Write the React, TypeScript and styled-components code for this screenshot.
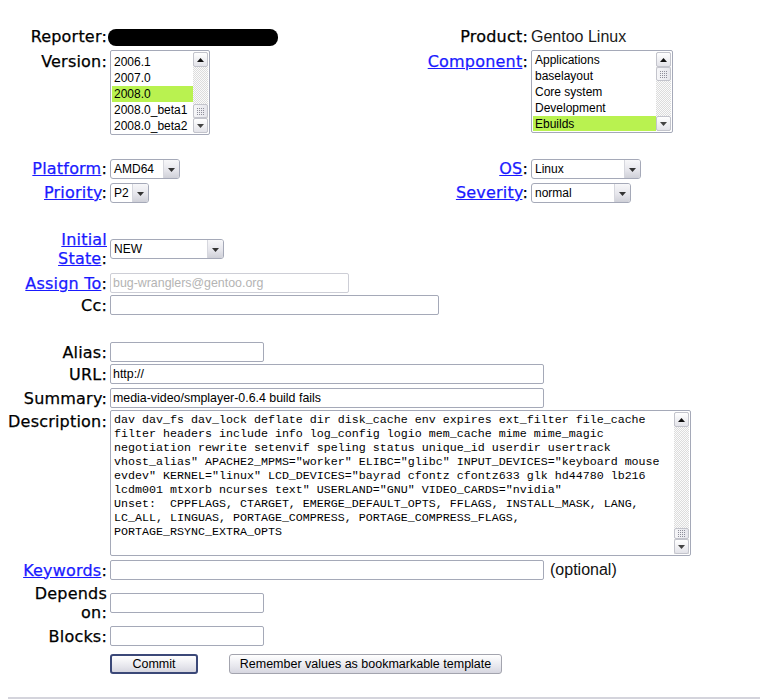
import React from "react";
import styled, { createGlobalStyle } from "styled-components";

const versions = ["2006.1", "2007.0", "2008.0", "2008.0_beta1", "2008.0_beta2"];
const components = ["Applications", "baselayout", "Core system", "Development", "Ebuilds"];

const description = [
  "dav dav_fs dav_lock deflate dir disk_cache env expires ext_filter file_cache",
  "filter headers include info log_config logio mem_cache mime mime_magic",
  "negotiation rewrite setenvif speling status unique_id userdir usertrack",
  'vhost_alias" APACHE2_MPMS="worker" ELIBC="glibc" INPUT_DEVICES="keyboard mouse',
  'evdev" KERNEL="linux" LCD_DEVICES="bayrad cfontz cfontz633 glk hd44780 lb216',
  'lcdm001 mtxorb ncurses text" USERLAND="GNU" VIDEO_CARDS="nvidia"',
  "Unset:  CPPFLAGS, CTARGET, EMERGE_DEFAULT_OPTS, FFLAGS, INSTALL_MASK, LANG,",
  "LC_ALL, LINGUAS, PORTAGE_COMPRESS, PORTAGE_COMPRESS_FLAGS,",
  "PORTAGE_RSYNC_EXTRA_OPTS",
].join("\n");

const GlobalStyle = createGlobalStyle`
  body {
    margin: 8px;
    background: #fff;
    color: #000;
    font-family: "DejaVu Sans", Verdana, sans-serif;
  }
`;

const Page = styled.form`
  padding-top: 19px;
`;

const TopTable = styled.div`
  display: grid;
  grid-template-columns: 99px 300px 115px 1fr;
  column-gap: 3px;
  row-gap: 4px;
  align-items: start;
`;

const Spacer = styled.div<{ $h: number }>`
  grid-column: 1 / -1;
  height: ${(p) => p.$h}px;
`;

const Label = styled.div<{ $pad?: number }>`
  font-size: 16px;
  line-height: 19px;
  letter-spacing: 0.2px;
  text-align: right;
  white-space: nowrap;
  -webkit-text-stroke: 0.25px currentColor;
  padding-top: ${(p) => p.$pad ?? 0}px;

  a {
    color: #1a1aff;
    text-decoration: underline;
  }
`;

const Cell = styled.div`
  display: flex;
  align-items: center;
  gap: 6px;
`;

const Row = styled.div<{ $gap: number; $align?: string }>`
  display: grid;
  grid-template-columns: 99px 1fr;
  column-gap: 3px;
  align-items: ${(p) => p.$align ?? "center"};
  margin-top: ${(p) => p.$gap}px;
`;

const Redacted = styled.div`
  width: 170px;
  height: 17px;
  margin: 2px 0 0 -2px;
  border-radius: 8px;
  background: #000;
`;

const PlainValue = styled.span`
  font-family: "Liberation Sans", Arial, sans-serif;
  font-size: 16px;
  line-height: 19px;
  color: #1a1a1a;
`;

/* list boxes */

const ListFrame = styled.div<{ $w: number; $h: number }>`
  display: flex;
  width: ${(p) => p.$w}px;
  height: ${(p) => p.$h}px;
  box-sizing: border-box;
  padding: 1px;
  border: 1px solid #a5a9b8;
  border-radius: 2px;
  background: #fff;
`;

const ListItems = styled.div<{ $shift: number }>`
  flex: 1;
  overflow: hidden;
  padding-top: ${(p) => p.$shift}px;
`;

const ListItem = styled.div<{ $selected?: boolean }>`
  height: 16px;
  line-height: 16px;
  padding-left: 2px;
  font-family: "Liberation Sans", Arial, sans-serif;
  font-size: 12px;
  white-space: nowrap;
  background: ${(p) => (p.$selected ? "#b9f250" : "transparent")};
`;

const ScrollColumn = styled.div`
  display: flex;
  flex-direction: column;
  width: 15px;
  background: repeating-conic-gradient(#dcdcdc 0 25%, #fbfbfb 0 50%) 0 0 / 2px 2px;
`;

const ScrollButton = styled.div`
  display: flex;
  align-items: center;
  justify-content: center;
  height: 15px;
  box-sizing: border-box;
  border: 1px solid #c3c4cc;
  border-radius: 2px;
  background: linear-gradient(#ffffff, #e3e3e9);
`;

const Track = styled.div`
  flex: 1;
`;

const Thumb = styled.div<{ $h: number }>`
  display: flex;
  align-items: center;
  justify-content: center;
  height: ${(p) => p.$h}px;
  box-sizing: border-box;
  border: 1px solid #c3c4cc;
  border-radius: 2px;
  background: linear-gradient(90deg, #f6f6f8, #e6e6ec);
`;

const Arrow = ({ dir, color = "#111" }: { dir: "up" | "down"; color?: string }) => (
  <svg width="7" height="4" viewBox="0 0 7 4">
    <path d={dir === "up" ? "M0 4L3.5 0L7 4Z" : "M0 0L7 0L3.5 4Z"} fill={color} />
  </svg>
);

const Grip = () => (
  <svg width="7" height="7" viewBox="0 0 7 7">
    {[0, 2, 4, 6].map((x) =>
      [0, 2, 4, 6].map((y) => (
        <rect key={`${x}-${y}`} x={x} y={y} width="1" height="1" fill="#8e8e9a" />
      ))
    )}
  </svg>
);

const Scrollbar = ({ thumb, thumbH }: { thumb: "top" | "bottom"; thumbH: number }) => (
  <ScrollColumn>
    <ScrollButton>
      <Arrow dir="up" />
    </ScrollButton>
    {thumb === "top" && (
      <Thumb $h={thumbH}>
        <Grip />
      </Thumb>
    )}
    <Track />
    {thumb === "bottom" && (
      <Thumb $h={thumbH}>
        <Grip />
      </Thumb>
    )}
    <ScrollButton>
      <Arrow dir="down" color="#444" />
    </ScrollButton>
  </ScrollColumn>
);

const ListBox = ({
  items,
  selected,
  width,
  height,
  shift,
  thumb,
}: {
  items: string[];
  selected: string;
  width: number;
  height: number;
  shift: number;
  thumb: "top" | "bottom";
}) => (
  <ListFrame $w={width} $h={height}>
    <ListItems $shift={shift}>
      {items.map((item) => (
        <ListItem key={item} $selected={item === selected}>
          {item}
        </ListItem>
      ))}
    </ListItems>
    <Scrollbar thumb={thumb} thumbH={14} />
  </ListFrame>
);

/* closed selects */

const SelectFrame = styled.div<{ $w: number }>`
  display: flex;
  width: ${(p) => p.$w}px;
  height: 20px;
  box-sizing: border-box;
  border: 1px solid #a5a9b8;
  border-radius: 3px;
  background: #fff;
  overflow: hidden;
`;

const SelectValue = styled.span`
  flex: 1;
  padding-left: 3px;
  font-family: "Liberation Sans", Arial, sans-serif;
  font-size: 12px;
  line-height: 18px;
  white-space: nowrap;
`;

const DropButton = styled.span`
  display: flex;
  align-items: center;
  justify-content: center;
  width: 16px;
  padding-top: 2px;
  box-sizing: border-box;
  border-left: 1px solid #d6d7de;
  background: linear-gradient(#f7f7f9 0%, #e6e6ec 55%, #cfd0d8 100%);
`;

const Select = ({ value, width }: { value: string; width: number }) => (
  <SelectFrame $w={width}>
    <SelectValue>{value}</SelectValue>
    <DropButton>
      <Arrow dir="down" color="#333" />
    </DropButton>
  </SelectFrame>
);

/* text fields */

const TextInput = styled.input<{ $w: number }>`
  width: ${(p) => p.$w}px;
  height: 20px;
  box-sizing: border-box;
  margin: 0;
  padding: 0 2px;
  border: 1px solid #a5a9b8;
  border-radius: 2px;
  background: #fff;
  color: #000;
  font-family: "Liberation Sans", Arial, sans-serif;
  font-size: 12.4px;
  outline: none;

  &:disabled {
    color: #b4b4b4;
    border-color: #cdced6;
    background: #fff;
  }
`;

const AreaFrame = styled.div`
  display: flex;
  width: 581px;
  height: 146px;
  box-sizing: border-box;
  padding: 1px;
  border: 1px solid #a5a9b8;
  border-radius: 2px;
  background: #fff;
`;

const TextArea = styled.textarea`
  flex: 1;
  margin: 0;
  padding: 1px 2px 0;
  border: none;
  outline: none;
  resize: none;
  overflow: hidden;
  font-family: "Liberation Mono", "Courier New", monospace;
  font-size: 11.67px;
  line-height: 14px;
  color: #000;
  background: transparent;
`;

const Optional = styled.span`
  font-family: "Liberation Sans", Arial, sans-serif;
  font-size: 16px;
  color: #111;
`;

const Buttons = styled.div`
  display: flex;
  gap: 31px;
`;

const Button = styled.button<{ $w: number; $default?: boolean }>`
  width: ${(p) => p.$w}px;
  height: 20px;
  box-sizing: border-box;
  margin: 0;
  padding: 0;
  border: ${(p) => (p.$default ? "2px solid #3b4878" : "1px solid #a3a4ae")};
  border-radius: 3px;
  background: linear-gradient(#ffffff, #e8e8ee 60%, #d6d6e0);
  color: #000;
  font-family: "Liberation Sans", Arial, sans-serif;
  font-size: 12.5px;
`;

const Rule = styled.hr`
  margin: 23px 0 0;
  height: 2px;
  border: none;
  background: #d4d4dc;
`;

export default function App() {
  return (
    <>
      <GlobalStyle />
      <Page onSubmit={(e) => e.preventDefault()}>
        <TopTable>
          <Label>Reporter:</Label>
          <div>
            <Redacted />
          </div>
          <Label>Product:</Label>
          <PlainValue>Gentoo Linux</PlainValue>

          <Label $pad={2}>Version:</Label>
          <ListBox items={versions} selected="2008.0" width={100} height={85} shift={2} thumb="bottom" />
          <Label $pad={2}>
            <a href="#">Component</a>:
          </Label>
          <ListBox items={components} selected="Ebuilds" width={142} height={83} shift={0} thumb="top" />

          <Spacer $h={16} />

          <Label>
            <a href="#">Platform</a>:
          </Label>
          <Select value="AMD64" width={70} />
          <Label>
            <a href="#">OS</a>:
          </Label>
          <Select value="Linux" width={110} />

          <Label>
            <a href="#">Priority</a>:
          </Label>
          <Select value="P2" width={39} />
          <Label>
            <a href="#">Severity</a>:
          </Label>
          <Select value="normal" width={100} />
        </TopTable>

        <Row $gap={27}>
          <Label>
            <a href="#">
              Initial
              <br />
              State
            </a>
            :
          </Label>
          <Cell>
            <Select value="NEW" width={114} />
          </Cell>
        </Row>
        <Row $gap={5}>
          <Label>
            <a href="#">Assign To</a>:
          </Label>
          <Cell>
            <TextInput $w={239} disabled defaultValue="bug-wranglers@gentoo.org" />
          </Cell>
        </Row>
        <Row $gap={2}>
          <Label>Cc:</Label>
          <Cell>
            <TextInput $w={329} />
          </Cell>
        </Row>

        <Row $gap={27}>
          <Label>Alias:</Label>
          <Cell>
            <TextInput $w={154} />
          </Cell>
        </Row>
        <Row $gap={2}>
          <Label>URL:</Label>
          <Cell>
            <TextInput $w={434} defaultValue="http://" />
          </Cell>
        </Row>
        <Row $gap={4}>
          <Label>Summary:</Label>
          <Cell>
            <TextInput $w={434} defaultValue="media-video/smplayer-0.6.4 build fails" />
          </Cell>
        </Row>
        <Row $gap={2} $align="start">
          <Label $pad={2}>Description:</Label>
          <AreaFrame>
            <TextArea defaultValue={description} spellCheck={false} />
            <Scrollbar thumb="bottom" thumbH={11} />
          </AreaFrame>
        </Row>
        <Row $gap={4}>
          <Label>
            <a href="#">Keywords</a>:
          </Label>
          <Cell>
            <TextInput $w={434} />
            <Optional>(optional)</Optional>
          </Cell>
        </Row>
        <Row $gap={4}>
          <Label>
            Depends
            <br />
            on:
          </Label>
          <Cell>
            <TextInput $w={154} />
          </Cell>
        </Row>
        <Row $gap={4}>
          <Label>Blocks:</Label>
          <Cell>
            <TextInput $w={154} />
          </Cell>
        </Row>
        <Row $gap={8}>
          <div />
          <Buttons>
            <Button type="submit" $w={88} $default>
              Commit
            </Button>
            <Button type="button" $w={273}>
              Remember values as bookmarkable template
            </Button>
          </Buttons>
        </Row>
        <Rule />
      </Page>
    </>
  );
}
